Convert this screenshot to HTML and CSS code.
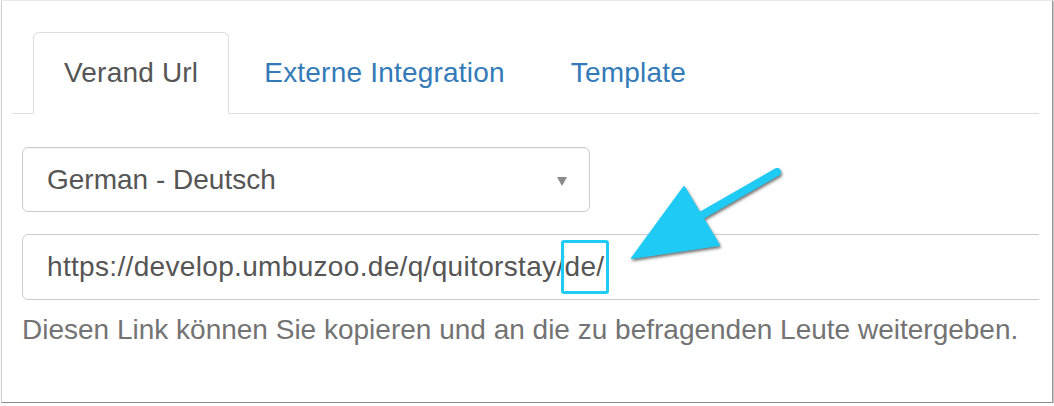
FILE: index.html
```html
<!DOCTYPE html>
<html lang="de">
<head>
    <meta charset="UTF-8">
    <meta name="viewport" content="width=device-width, initial-scale=1.0">
    <title>Verand Url</title>
    <link rel="stylesheet" href="styles.css">
</head>
<body>
    <div class="frame">
        <ul class="nav-tabs">
            <li class="active"><a>Verand Url</a></li>
            <li><a>Externe Integration</a></li>
            <li><a>Template</a></li>
        </ul>
        <div class="tab-content">
            <div class="select-box">
                <span>German - Deutsch</span>
                <span class="caret"></span>
            </div>
            <div class="url-box">https://develop.umbuzoo.de/q/quitorstay/<span class="mark">de/</span></div>
            <p class="help-block">Diesen Link können Sie kopieren und an die zu befragenden Leute weitergeben.</p>
        </div>
    </div>

    <svg class="arrow" width="1054" height="406" viewBox="0 0 1054 406">
        <line x1="777" y1="172" x2="690" y2="222" stroke="#1fcbf5" stroke-width="8" stroke-linecap="round"/>
        <polygon points="632,258 684,187 719,245" fill="#1fcbf5" stroke="#1fcbf5" stroke-width="2" stroke-linejoin="round"/>
    </svg>
</body>
</html>
```

FILE: styles.css
```css
body {
    margin: 0;
    background: #ffffff;
    font-family: "Liberation Sans", Arial, sans-serif;
    font-size: 28px;
    color: #555555;
}
.frame {
    margin-left: 1px;
    width: 1052px;
    height: 403px;
    padding-top: 31px;
    box-sizing: border-box;
    border-left: 1px solid #d0d0d0;
    border-top: 1px solid #e8e8e8;
    border-right: 1px solid #9a9a9a;
    border-bottom: 1px solid #8a8a8a;
    box-shadow: 1px 1px 2px rgba(0, 0, 0, 0.35);
    background: #ffffff;
}
.nav-tabs {
    display: flex;
    list-style: none;
    margin: 0 13px 0 10px;
    padding: 0 0 0 21px;
    border-bottom: 1px solid #dddddd;
}
.nav-tabs li {
    margin-bottom: -1px;
    margin-right: 4px;
}
.nav-tabs a {
    display: block;
    padding: 23px 30px;
    line-height: 34px;
    letter-spacing: 0.2px;
    border: 1px solid transparent;
    border-radius: 6px 6px 0 0;
    color: #337ab7;
}
.nav-tabs .active a {
    color: #555555;
    background: #ffffff;
    border-color: #dddddd;
    border-bottom-color: transparent;
}
.tab-content {
    margin: 33px 13px 0 20px;
    overflow: hidden;
}
.select-box {
    position: relative;
    width: 568px;
    height: 65px;
    box-sizing: border-box;
    padding-left: 24px;
    display: flex;
    align-items: center;
    border: 1px solid #cccccc;
    border-radius: 6px;
    box-shadow: inset 0 1px 1px rgba(0, 0, 0, 0.04);
}
.caret {
    position: absolute;
    right: 22px;
    top: 29px;
    width: 0;
    height: 0;
    border-left: 5px solid transparent;
    border-right: 5px solid transparent;
    border-top: 9px solid #8a8a8a;
}
.url-box {
    margin-top: 22px;
    width: calc(100% + 20px);
    height: 66px;
    box-sizing: border-box;
    padding-left: 24px;
    display: flex;
    align-items: center;
    letter-spacing: 0.33px;
    border: 1px solid #cccccc;
    border-radius: 6px 0 0 6px;
}
.mark {
    position: relative;
}
.mark::after {
    content: "";
    position: absolute;
    left: -4px;
    right: -5px;
    top: -11px;
    bottom: -11px;
    border: 3px solid #1fcbf5;
    border-radius: 3px;
}
.help-block {
    margin: 13px 0 0 0;
    line-height: 34px;
    color: #737373;
    white-space: nowrap;
}
.arrow {
    position: absolute;
    top: 0;
    left: 0;
    pointer-events: none;
    filter: drop-shadow(1px 2px 1.5px rgba(0, 0, 0, 0.55));
}
```
